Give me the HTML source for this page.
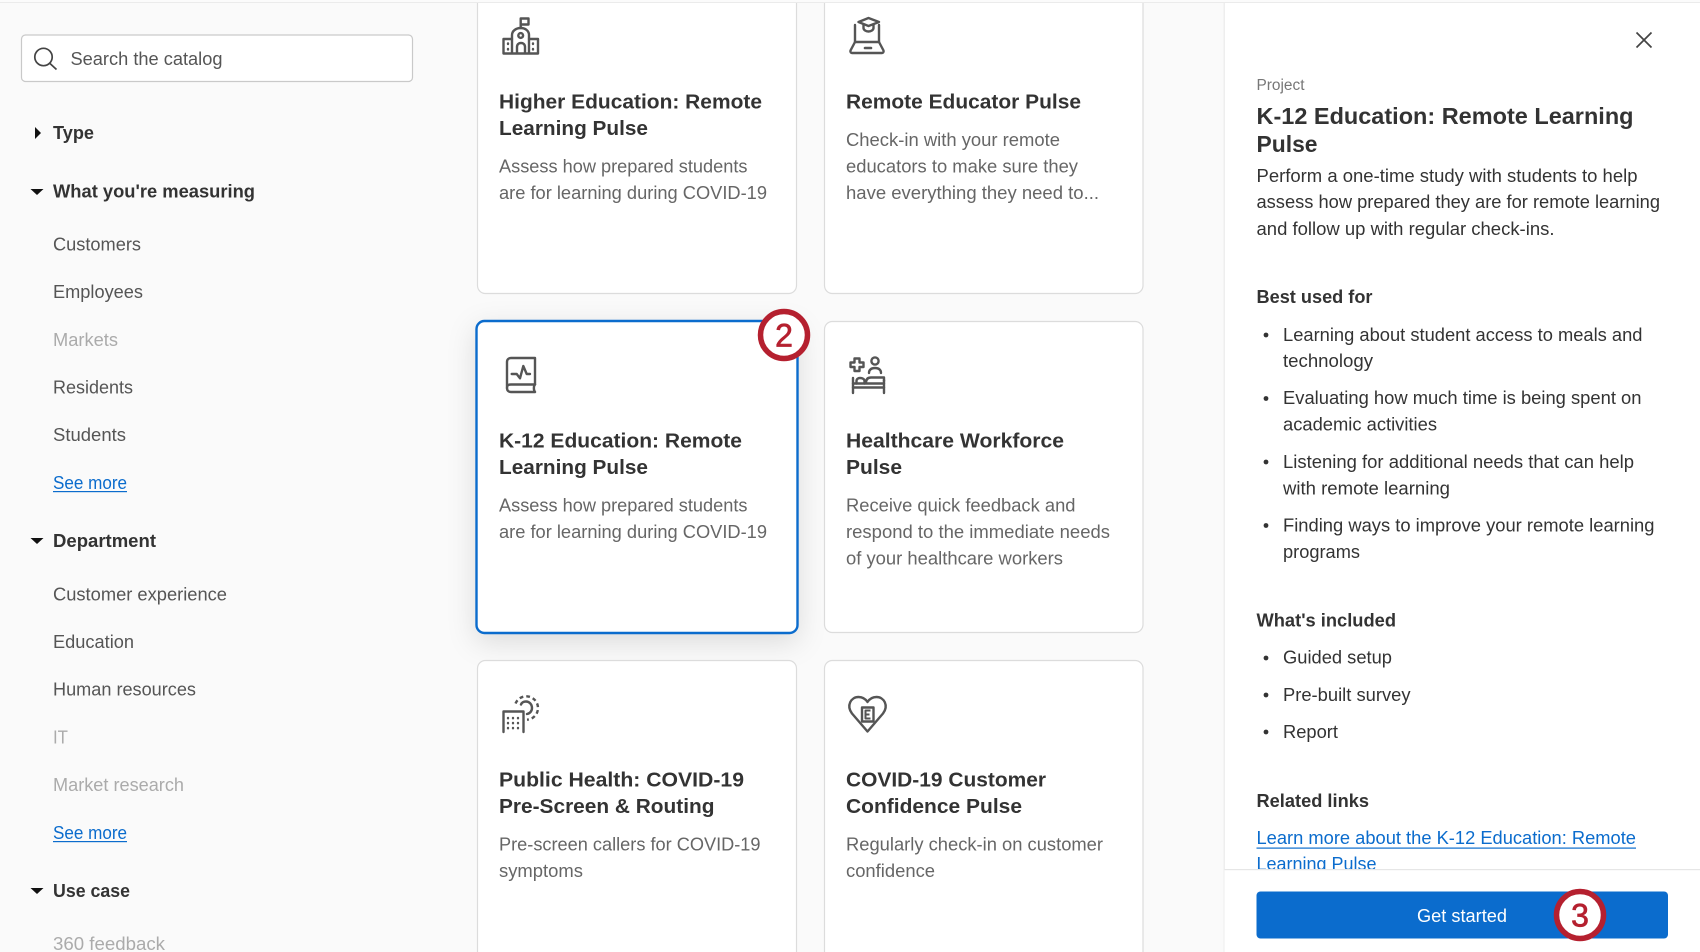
<!DOCTYPE html>
<html lang="en"><head><meta charset="utf-8"><title>Catalog</title>
<style>
html,body{margin:0;padding:0;background:#fafafa;width:1700px;height:952px;overflow:hidden}
svg{display:block;font-family:"Liberation Sans",Arial,sans-serif}
.r{font-size:18.5px;fill:#555}
.m{font-size:18.5px;fill:#ababab}
.h{font-size:18.5px;fill:#333;font-weight:700}
.l{font-size:18.5px;fill:#0b6ccd}
.t{font-size:20.5px;fill:#333;font-weight:700}
.d{font-size:18.5px;fill:#666}
.p{font-size:18.5px;fill:#333}
.b{font-size:18.5px;fill:#333;font-weight:700}
.i{fill:none;stroke:#555;stroke-width:2.4;stroke-linecap:round;stroke-linejoin:round}
.card{fill:#fff;stroke:#dcdcdc;stroke-width:1.2}
</style></head><body>
<svg width="1700" height="952" viewBox="0 0 1700 952" xmlns="http://www.w3.org/2000/svg">
<rect width="1700" height="952" fill="#fafafa"/>

<!-- sidebar -->
<rect x="21.5" y="35" width="391" height="46.5" rx="4" fill="#fff" stroke="#c9c9c9" stroke-width="1.2"/>
<circle cx="43.5" cy="57" r="8.7" fill="none" stroke="#444" stroke-width="1.7"/>
<path d="M50 63.5L56.5 69.5" fill="none" stroke="#444" stroke-width="1.7"/>
<text x="70.500" y="65" class="r" textLength="152" lengthAdjust="spacingAndGlyphs">Search the catalog</text>
<path d="M35 127L41 133L35 139Z" fill="#111"/>
<text x="53" y="139" class="h" textLength="41" lengthAdjust="spacingAndGlyphs">Type</text>
<path d="M30.5 189H43.5L37 195Z" fill="#111"/>
<text x="53" y="197.5" class="h" textLength="202" lengthAdjust="spacingAndGlyphs">What you're measuring</text>
<text x="53" y="250.5" class="r" textLength="88" lengthAdjust="spacingAndGlyphs">Customers</text>
<text x="53" y="298" class="r" textLength="90" lengthAdjust="spacingAndGlyphs">Employees</text>
<text x="53" y="346" class="m" textLength="65" lengthAdjust="spacingAndGlyphs">Markets</text>
<text x="53" y="393.5" class="r" textLength="80" lengthAdjust="spacingAndGlyphs">Residents</text>
<text x="53" y="441" class="r" textLength="73" lengthAdjust="spacingAndGlyphs">Students</text>
<text x="53" y="489" class="l" textLength="74" lengthAdjust="spacingAndGlyphs">See more</text>
<rect x="53" y="491" width="74" height="1.2" fill="#0b6ccd"/>
<path d="M30.5 538H43.5L37 544Z" fill="#111"/>
<text x="53" y="547" class="h" textLength="103" lengthAdjust="spacingAndGlyphs">Department</text>
<text x="53" y="600.5" class="r" textLength="174" lengthAdjust="spacingAndGlyphs">Customer experience</text>
<text x="53" y="648" class="r" textLength="81" lengthAdjust="spacingAndGlyphs">Education</text>
<text x="53" y="695.5" class="r" textLength="143" lengthAdjust="spacingAndGlyphs">Human resources</text>
<text x="53" y="743.5" class="m" textLength="15" lengthAdjust="spacingAndGlyphs">IT</text>
<text x="53" y="791" class="m" textLength="131" lengthAdjust="spacingAndGlyphs">Market research</text>
<text x="53" y="839" class="l" textLength="74" lengthAdjust="spacingAndGlyphs">See more</text>
<rect x="53" y="841" width="74" height="1.2" fill="#0b6ccd"/>
<path d="M30.5 888H43.5L37 894Z" fill="#111"/>
<text x="53" y="897" class="h" textLength="77" lengthAdjust="spacingAndGlyphs">Use case</text>
<text x="53" y="950" class="m" textLength="112" lengthAdjust="spacingAndGlyphs">360 feedback</text>

<!-- cards row 1 -->
<rect class="card" x="477.5" y="-20" width="319" height="313.5" rx="8"/>
<rect class="card" x="824.5" y="-20" width="318.5" height="313.5" rx="8"/>
<!-- school -->
<g class="i">
<path d="M520.7 28V18.5H528.5V24.5H520.7"/>
<path d="M512 53V35C512 31 516 28 520.7 28C525.5 28 529 31 529 35V53"/>
<path d="M512 39H503.5V53.5H538V39H529"/>
<circle cx="520.7" cy="35.5" r="2.4"/>
<path d="M517 53V47C517 44 519 43 521 43C523 43 525 44 525 47V53"/>
<path d="M508 43.5V44M508 49V49.5M533 43.5V44M533 49V49.5"/>
</g>
<text x="499" y="108.5" class="t" textLength="263" lengthAdjust="spacingAndGlyphs">Higher Education: Remote</text>
<text x="499" y="135" class="t" textLength="149" lengthAdjust="spacingAndGlyphs">Learning Pulse</text>
<text x="499" y="172.4" class="d" textLength="248.5" lengthAdjust="spacingAndGlyphs">Assess how prepared students</text>
<text x="499" y="199" class="d" textLength="268" lengthAdjust="spacingAndGlyphs">are for learning during COVID-19</text>
<!-- laptop -->
<g class="i">
<path d="M855 42V25M879 25V42"/>
<path d="M855 42H879L883.5 50.5C884 52 883 53 882 53H852C851 53 850 52 850.5 50.5Z"/>
<path d="M865 48H871" stroke-width="2.6"/>
<path d="M858.5 22L868.5 18L879 22L868.5 26Z"/>
<path d="M863.5 24.5V28C863.5 30 866 31.5 868.5 31.5C871 31.5 873.5 30 873.5 28V24.5"/>
</g>
<text x="846" y="108.5" class="t" textLength="235" lengthAdjust="spacingAndGlyphs">Remote Educator Pulse</text>
<text x="846" y="146" class="d" textLength="214" lengthAdjust="spacingAndGlyphs">Check-in with your remote</text>
<text x="846" y="172.4" class="d" textLength="232" lengthAdjust="spacingAndGlyphs">educators to make sure they</text>
<text x="846" y="199" class="d" textLength="253" lengthAdjust="spacingAndGlyphs">have everything they need to...</text>

<!-- cards row 2 -->
<rect x="476.5" y="321" width="321" height="312" rx="8" fill="#fff" stroke="#0b6ccd" stroke-width="2.4" style="filter:drop-shadow(0 8px 14px rgba(0,0,0,.12))"/>
<rect class="card" x="824.5" y="321.5" width="318.5" height="311" rx="8"/>
<!-- book -->
<g class="i">
<path d="M535 358H511C508.5 358 507 359.5 507 362V388C507 384.5 509 384.5 511 384.5H535Z"/>
<path d="M507 388C507 391 509 392 511 392H535M535 384.5C533.5 386 533.5 390 535 392"/>
<path d="M511.7 374H516.7L520 378.3L523.3 366L526.7 374H530"/>
</g>
<text x="499" y="447.5" class="t" textLength="243" lengthAdjust="spacingAndGlyphs">K-12 Education: Remote</text>
<text x="499" y="474" class="t" textLength="149" lengthAdjust="spacingAndGlyphs">Learning Pulse</text>
<text x="499" y="511.5" class="d" textLength="248.5" lengthAdjust="spacingAndGlyphs">Assess how prepared students</text>
<text x="499" y="538" class="d" textLength="268" lengthAdjust="spacingAndGlyphs">are for learning during COVID-19</text>
<!-- bed -->
<g class="i">
<path d="M854.5 358.5H859.5V362.5H863.5V367H859.5V371H854.5V367H850.5V362.5H854.5Z"/>
<circle cx="875" cy="361" r="3.6"/>
<path d="M869 373C869 369.5 871.5 368 875 368C878.5 368 881 369.5 881 373"/>
<path d="M853 378V393M884 380V393"/>
<path d="M853 387.5H884M853 383.5H884"/>
<path d="M856.5 383.5V381C856.5 379 858 378 860 378C862.5 378 864.5 379 864.5 381V383.5"/>
<path d="M866 383C866 379 868 377.5 871 377.5H884V381"/>
</g>
<text x="846" y="447.5" class="t" textLength="218" lengthAdjust="spacingAndGlyphs">Healthcare Workforce</text>
<text x="846" y="474" class="t" textLength="56" lengthAdjust="spacingAndGlyphs">Pulse</text>
<text x="846" y="511.5" class="d" textLength="229.5" lengthAdjust="spacingAndGlyphs">Receive quick feedback and</text>
<text x="846" y="538" class="d" textLength="264" lengthAdjust="spacingAndGlyphs">respond to the immediate needs</text>
<text x="846" y="564.5" class="d" textLength="217" lengthAdjust="spacingAndGlyphs">of your healthcare workers</text>

<!-- cards row 3 -->
<rect class="card" x="477.5" y="660.5" width="319" height="320" rx="8"/>
<rect class="card" x="824.5" y="660.5" width="318.5" height="320" rx="8"/>
<!-- public health -->
<g class="i">
<path d="M503.5 732V711.5H523.5V732"/>
<path d="M508 718V718.3M513 718V718.3M518 718V718.3M508 723V723.3M513 723V723.3M518 723V723.3M508 728V728.3M513 728V728.3M518 728V728.3" stroke-width="2.4"/>
<path d="M515.5 703.5A11.7 11.7 0 1 1 527 719.7" stroke-dasharray="3.8 3" stroke-linecap="butt"/>
<path d="M521 704.5C522 702 524 701.5 526 701.5C529.5 701.5 532 704.5 532 708C532 711 530 713.5 527 714"/>
</g>
<text x="499" y="786.5" class="t" textLength="245" lengthAdjust="spacingAndGlyphs">Public Health: COVID-19</text>
<text x="499" y="813" class="t" textLength="215.5" lengthAdjust="spacingAndGlyphs">Pre-Screen &amp; Routing</text>
<text x="499" y="850.5" class="d" textLength="261.5" lengthAdjust="spacingAndGlyphs">Pre-screen callers for COVID-19</text>
<text x="499" y="877" class="d" textLength="84" lengthAdjust="spacingAndGlyphs">symptoms</text>
<!-- heart -->
<g class="i">
<path d="M867.5 731.5L852 713.5C846 705.5 851 697 858.5 697C862.5 697 865.5 699 867.5 702C869.5 699 872.5 697 876.5 697C884 697 889 705.5 883 713.5Z"/>
<path d="M862 707.5H873.5V721.5H862Z"/>
<path d="M870.5 710.5H865.5V718.5H870.5M865.5 714.5H869.5" stroke-width="2" stroke-linecap="butt"/>
</g>
<text x="846" y="786.5" class="t" textLength="200" lengthAdjust="spacingAndGlyphs">COVID-19 Customer</text>
<text x="846" y="813" class="t" textLength="176" lengthAdjust="spacingAndGlyphs">Confidence Pulse</text>
<text x="846" y="850.5" class="d" textLength="257" lengthAdjust="spacingAndGlyphs">Regularly check-in on customer</text>
<text x="846" y="877" class="d" textLength="89" lengthAdjust="spacingAndGlyphs">confidence</text>

<!-- right panel -->
<rect x="1224.5" y="2" width="475.5" height="950" fill="#fff"/>
<rect x="1223.5" y="2" width="1.5" height="950" fill="#eeeeee"/>
<path d="M1636.5 32.5L1651.5 47.5M1651.5 32.5L1636.5 47.5" stroke="#444" stroke-width="1.7" fill="none"/>
<text x="1256.5" y="90" style="font-size:15.5px;fill:#777" textLength="48" lengthAdjust="spacingAndGlyphs">Project</text>
<text x="1256.5" y="124" style="font-size:23.5px;fill:#333;font-weight:700" textLength="377" lengthAdjust="spacingAndGlyphs">K-12 Education: Remote Learning</text>
<text x="1256.5" y="152" style="font-size:23.5px;fill:#333;font-weight:700" textLength="61" lengthAdjust="spacingAndGlyphs">Pulse</text>
<text x="1256.5" y="182" class="p" textLength="381" lengthAdjust="spacingAndGlyphs">Perform a one-time study with students to help</text>
<text x="1256.5" y="208" class="p" textLength="403.5" lengthAdjust="spacingAndGlyphs">assess how prepared they are for remote learning</text>
<text x="1256.5" y="235" class="p" textLength="298" lengthAdjust="spacingAndGlyphs">and follow up with regular check-ins.</text>
<text x="1256.5" y="303" class="b" textLength="116" lengthAdjust="spacingAndGlyphs">Best used for</text>
<g fill="#333">
<circle cx="1266" cy="335" r="2.4"/><circle cx="1266" cy="398.5" r="2.4"/><circle cx="1266" cy="462" r="2.4"/><circle cx="1266" cy="525.5" r="2.4"/>
<circle cx="1266" cy="658" r="2.4"/><circle cx="1266" cy="695" r="2.4"/><circle cx="1266" cy="732" r="2.4"/>
</g>
<text x="1283" y="341" class="p" textLength="359.5" lengthAdjust="spacingAndGlyphs">Learning about student access to meals and</text>
<text x="1283" y="367" class="p" textLength="90" lengthAdjust="spacingAndGlyphs">technology</text>
<text x="1283" y="404" class="p" textLength="358.5" lengthAdjust="spacingAndGlyphs">Evaluating how much time is being spent on</text>
<text x="1283" y="430.5" class="p" textLength="154" lengthAdjust="spacingAndGlyphs">academic activities</text>
<text x="1283" y="468" class="p" textLength="351" lengthAdjust="spacingAndGlyphs">Listening for additional needs that can help</text>
<text x="1283" y="494.4" class="p" textLength="167" lengthAdjust="spacingAndGlyphs">with remote learning</text>
<text x="1283" y="531.5" class="p" textLength="371.5" lengthAdjust="spacingAndGlyphs">Finding ways to improve your remote learning</text>
<text x="1283" y="558" class="p" textLength="77" lengthAdjust="spacingAndGlyphs">programs</text>
<text x="1256.5" y="626.7" class="b" textLength="139.5" lengthAdjust="spacingAndGlyphs">What's included</text>
<text x="1283" y="663.5" class="p" textLength="109" lengthAdjust="spacingAndGlyphs">Guided setup</text>
<text x="1283" y="701" class="p" textLength="127.5" lengthAdjust="spacingAndGlyphs">Pre-built survey</text>
<text x="1283" y="738" class="p" textLength="55" lengthAdjust="spacingAndGlyphs">Report</text>
<text x="1256.5" y="807" class="b" textLength="112.5" lengthAdjust="spacingAndGlyphs">Related links</text>
<text x="1256.5" y="844" class="l" textLength="379.5" lengthAdjust="spacingAndGlyphs">Learn more about the K-12 Education: Remote</text>
<rect x="1256.5" y="847.5" width="379.5" height="1.2" fill="#0b6ccd"/>
<text x="1256.5" y="870" class="l" textLength="120" lengthAdjust="spacingAndGlyphs">Learning Pulse</text>

<!-- footer -->
<rect x="1224.5" y="869" width="475.5" height="83" fill="#fff"/>
<rect x="1224.5" y="869" width="475.5" height="1.2" fill="#e6e6e6"/>
<rect x="1256.5" y="891.5" width="411.5" height="47" rx="4" fill="#0b6ccd"/>
<text x="1417" y="922" style="font-size:18.5px;fill:#fff" textLength="90" lengthAdjust="spacingAndGlyphs">Get started</text>

<!-- badges -->
<circle cx="784" cy="335" r="23.5" fill="#fff" stroke="#b5202f" stroke-width="5.5"/>
<text x="784" y="346.5" text-anchor="middle" style="font-size:32px;fill:#b5202f;stroke:#b5202f;stroke-width:.7">2</text>
<circle cx="1580" cy="915" r="23.5" fill="#fff" stroke="#b5202f" stroke-width="5.5"/>
<text x="1580" y="926.5" text-anchor="middle" style="font-size:32px;fill:#b5202f;stroke:#b5202f;stroke-width:.7">3</text>

<!-- top line -->
<rect x="0" y="0" width="1700" height="2" fill="#fbfbfb"/>
<rect x="0" y="2" width="1700" height="1" fill="#ebebeb"/>
</svg>
</body></html>
